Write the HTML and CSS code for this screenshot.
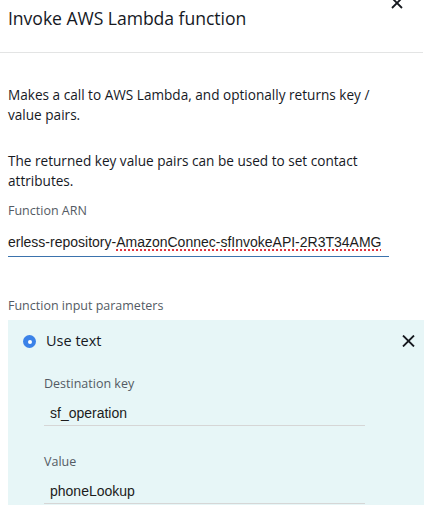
FILE: index.html
```html
<!DOCTYPE html>
<html>
<head>
<meta charset="utf-8">
<link rel="stylesheet" href="styles.css">
</head>
<body>
<div class="panel">
  <header class="head">
    <h1 class="title">Invoke AWS Lambda function</h1>
    <button class="close top" aria-label="Close">
      <svg width="12" height="12" viewBox="0 0 12 12"><path d="M1 1L11 11M11 1L1 11" stroke="#16191f" stroke-width="1.8" fill="none"/></svg>
    </button>
  </header>
  <div class="body">
    <p class="desc">Makes a call to AWS Lambda, and optionally returns key / value pairs.</p>
    <p class="desc second">The returned key value pairs can be used to set contact attributes.</p>
    <label class="label">Function ARN</label>
    <div class="arn">
      <span class="arn-text">erless-repository-<span class="spell">AmazonConnec-sfInvokeAPI-2R3T34AMG</span></span>
    </div>
    <label class="label params">Function input parameters</label>
    <div class="box">
      <div class="box-head">
        <span class="radio"><span class="dot"></span></span>
        <span class="use">Use text</span>
        <svg class="box-close" width="13" height="12" viewBox="0 0 13 12"><path d="M1 0.5L12 11.5M12 0.5L1 11.5" stroke="#16191f" stroke-width="1.8" fill="none"/></svg>
      </div>
      <div class="field">
        <div class="flabel">Destination key</div>
        <div class="finput">sf_operation</div>
      </div>
      <div class="field">
        <div class="flabel">Value</div>
        <div class="finput">phoneLookup</div>
      </div>
    </div>
  </div>
</div>
</body>
</html>
```
FILE: styles.css
```css
html, body {
  margin: 0;
  padding: 0;
  background: #ffffff;
  overflow: hidden;
}
body {
  font-family: "Open Sans", "Noto Sans", sans-serif;
  color: #16191f;
  width: 429px;
  height: 505px;
}
.panel {
  width: 423px;
}
.head {
  position: relative;
  height: 52px;
  border-bottom: 1px solid #e3e4e4;
  padding-left: 8px;
}
.title {
  margin: 0;
  padding-top: 6px;
  font-size: 17.6px;
  font-weight: 400;
  line-height: 24px;
  letter-spacing: -0.05px;
}
.close {
  position: absolute;
  right: 20px;
  top: -3px;
  border: 0;
  background: none;
  padding: 0;
  width: 12px;
  height: 12px;
}
.close svg { display: block; }
.body {
  padding-left: 8px;
}
.desc {
  margin: 32px 0 0;
  font-size: 13.6px;
  line-height: 19.5px;
  width: 390px;
}
.desc.second {
  margin-top: 27px;
}
.label {
  display: block;
  margin-top: 13px;
  font-size: 12.5px;
  line-height: 16px;
  color: #545b64;
}
.arn {
  margin-top: 14px;
  width: 381px;
  height: 23px;
  border-bottom: 1.5px solid #3b73ad;
  white-space: nowrap;
  font-family: "Liberation Sans", Arial, sans-serif;
  font-size: 14px;
  line-height: 18px;
  color: #1c1c1c;
}
.spell {
  text-decoration: underline dotted #e0343b;
  text-decoration-thickness: 2px;
  text-underline-offset: 2px;
}
.label.params {
  margin-top: 41px;
}
.box {
  margin-top: 6px;
  width: 416px;
  height: 200px;
  background: #e7f6f7;
  padding-top: 12px;
  box-sizing: border-box;
}
.box-head {
  display: flex;
  align-items: center;
  height: 17px;
  padding-left: 15px;
  padding-right: 9px;
}
.radio {
  width: 13px;
  height: 13px;
  border-radius: 50%;
  background: #3b82e8;
  display: flex;
  align-items: center;
  justify-content: center;
  margin-top: 2px;
}
.dot {
  width: 4px;
  height: 4px;
  border-radius: 50%;
  background: #fff;
}
.use {
  margin-left: 10px;
  font-size: 14.5px;
  line-height: 17px;
  flex: 1;
}
.box-close {
  display: block;
}
.field {
  padding-left: 36px;
}
.flabel {
  margin-top: 27px;
  font-size: 12.5px;
  line-height: 16px;
  color: #545b64;
}
.field + .field .flabel {
  margin-top: 28px;
}
.finput {
  margin-top: 12px;
  width: 321px;
  box-sizing: border-box;
  padding-left: 6px;
  height: 22px;
  border-bottom: 1.5px solid #d6d6d6;
  font-family: "Liberation Sans", Arial, sans-serif;
  font-size: 14px;
  line-height: 18px;
  color: #1c1c1c;
}
```
